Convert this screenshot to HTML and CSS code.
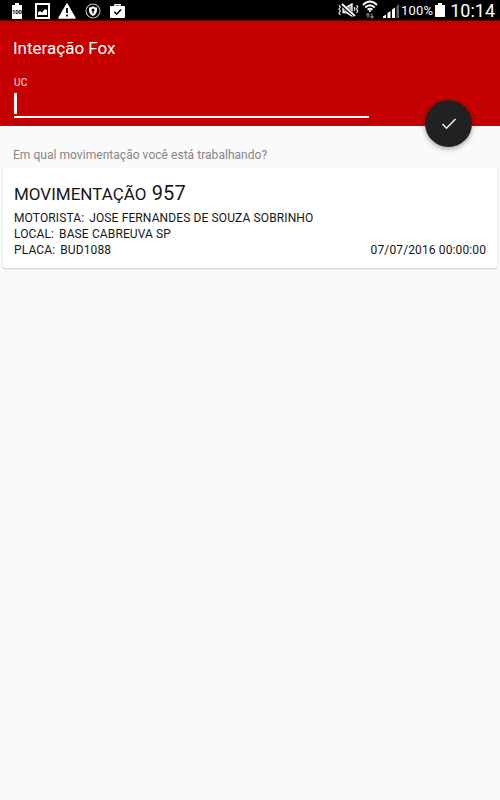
FILE: index.html
```html
<!DOCTYPE html>
<html lang="pt-BR">
<head>
<meta charset="UTF-8">
<meta name="viewport" content="width=device-width, initial-scale=1.0">
<title>Interação Fox</title>
<link rel="stylesheet" href="styles.css">
</head>
<body>

<!-- Barra de status -->
<div class="status-bar">
    <div class="status-left">
        <svg class="icon-battery-full" width="12" height="16" viewBox="0 0 12 16">
            <path d="M4 0h4v2h3v14H1V2h3z" fill="#fff"/>
            <text x="6" y="10.500" text-anchor="middle" textLength="10">100</text>
        </svg>
        <svg width="15" height="16" viewBox="0 0 15 16">
            <path d="M1 1h13v14H1z" fill="none" stroke="#fff" stroke-width="2"/>
            <path d="M3 12V9.500l2-1.500 2 1.500 3-3.500 2 1V12z" fill="#fff"/>
        </svg>
        <svg width="18" height="16" viewBox="0 0 18 16">
            <path d="M9 1L17 15H1z" fill="#fff" stroke="#fff" stroke-width="1.500" stroke-linejoin="round"/>
            <path d="M9 5v5M9 11.500v2" stroke="#000" stroke-width="1.800"/>
        </svg>
        <svg width="16" height="16" viewBox="0 0 16 16">
            <circle cx="8" cy="8" r="7" fill="none" stroke="#bbb" stroke-width="1.100"/>
            <path d="M4 4.500Q6.500 4.500 8 3.300Q9.500 4.500 12 4.500V7Q12 11 8 13Q4 11 4 7z" fill="#fff"/>
            <circle cx="8" cy="7" r="1.500"/>
            <path d="M8 7v3.500" stroke="#000" stroke-width="1.200"/>
        </svg>
        <svg width="15" height="16" viewBox="0 0 15 16">
            <path d="M5 3.500V1.800h5v1.700" fill="none" stroke="#fff" stroke-width="1.500"/>
            <rect y="3" width="15" height="12" rx="1" fill="#fff"/>
            <path d="M4.300 8.800l2.400 2.400 4.300-4.700" fill="none" stroke="#000" stroke-width="1.600"/>
        </svg>
    </div>
    <div class="status-right">
        <svg class="icon-mute" width="21" height="16" viewBox="0 0 21 16">
            <path d="M5 5.500h3l6-3.500v12l-6-3.500H5z" fill="#999" stroke="#fff" stroke-width="1.300"/>
            <path d="M4 3l13 11" stroke="#000" stroke-width="3"/>
            <path d="M4 2l13 12" stroke="#fff" stroke-width="1.800"/>
            <path d="M1 3l1.300 2L1 7l1.300 2L1 11l1.300 2M18.500 3l1.300 2-1.300 2 1.300 2-1.300 2M16.500 5v4" fill="none" stroke="#ddd" stroke-width="1.300"/>
        </svg>
        <svg class="icon-wifi" width="16" height="20" viewBox="0 0 16 20">
            <path d="M1 5Q8-2 15 5M3.200 7.500Q8 3 12.800 7.500M5.500 9.800Q8 7.800 10.500 9.800" fill="none" stroke="#fff" stroke-width="1.800"/>
            <circle cx="8" cy="11" r="1.100" fill="#fff"/>
            <path d="M6 18v-4.500M4.300 15.300L6 13.500l1.700 1.800M10 13.500V18M8.300 16.200L10 18l1.700-1.800" fill="none" stroke="#777" stroke-width="1.300"/>
        </svg>
        <svg class="icon-signal" width="17" height="15" viewBox="0 0 17 15">
            <path d="M0 15v-1.500l3-2V15zM4.500 15v-5l3-2v7zM9 15V6.500l3-2V15z" fill="#fff"/>
            <path d="M13.500 15V3L16 1v14z" fill="#666"/>
        </svg>
        <span class="status-percent">100%</span>
        <svg class="icon-battery" width="10" height="15" viewBox="0 0 10 15">
            <path d="M3 0h4v2h3v12H0V2h3z" fill="#fff"/>
        </svg>
        <span class="status-clock">10:14</span>
    </div>
</div>

<!-- Cabeçalho com o campo UC -->
<header>
    <h1>Interação Fox</h1>
    <label for="uc">UC</label>
    <div class="uc-field" id="uc"><span class="cursor"></span></div>
    <button class="fab" aria-label="Confirmar">
        <svg width="16" height="14" viewBox="0 0 16 14">
            <path d="M1.500 7l4 4.200L14.500 2" fill="none" stroke="#eee" stroke-width="1.600"/>
        </svg>
    </button>
</header>

<!-- Lista de movimentações -->
<main>
    <p class="question">Em qual movimentação você está trabalhando?</p>
    <div class="card">
        <h2>MOVIMENTAÇÃO <span>957</span></h2>
        <p><span class="label">MOTORISTA:</span><span class="driver">JOSE FERNANDES DE SOUZA SOBRINHO</span></p>
        <p><span class="label">LOCAL:</span><span class="place">BASE CABREUVA SP</span></p>
        <p><span class="label">PLACA:</span><span class="plate">BUD1088</span><span class="date">07/07/2016 00:00:00</span></p>
    </div>
</main>

</body>
</html>
```
FILE: styles.css
```css
* {
    box-sizing: border-box;
}

body {
    margin: 0;
    min-height: 800px;
    background-color: #fafafa;
    color: #161616;
    font-family: Roboto, sans-serif;
}

/* Barra de status */
.status-bar {
    display: flex;
    justify-content: space-between;
    height: 21px;
    padding: 0 5px 0 11px;
    background-color: #000;
    border-bottom: 1px solid #600000;
    color: #fff;
}

.status-left,
.status-right {
    display: flex;
    align-items: center;
}

.status-left {
    gap: 9px;
    padding-top: 1px;
}

.status-left svg:first-child {
    margin-right: 3px;
}

.status-left svg:nth-child(2) {
    margin-right: -1px;
}

.icon-battery-full text {
    font-size: 6px;
    font-weight: bold;
}

.icon-wifi {
    margin-left: 3px;
}

.icon-signal {
    margin: 0 0 0 5px;
}

.status-percent {
    margin: 1px 0 0 1px;
    font-size: 13px;
    letter-spacing: 0.2px;
}

.icon-battery {
    margin: 1px 0 0 2px;
}

.status-clock {
    margin-left: 5px;
    font-size: 18px;
}

/* Cabeçalho */
header {
    position: relative;
    height: 105px;
    padding: 16px 14px 0;
    background-color: #c40000;
    color: #fff;
}

h1 {
    margin: 0 0 0 -1px;
    font-size: 17px;
    font-weight: normal;
    line-height: 22px;
}

label {
    display: block;
    margin-top: 17px;
    font-size: 10px;
    letter-spacing: 0.2px;
    line-height: 14px;
    opacity: 0.9;
}

.uc-field {
    width: 355px;
    height: 25px;
    margin-top: 3px;
    border-bottom: 2px solid #fff;
}

.cursor {
    display: block;
    width: 3px;
    height: 21px;
    background-color: #fff;
}

.fab {
    position: absolute;
    right: 28px;
    bottom: -21px;
    display: flex;
    align-items: center;
    justify-content: center;
    width: 47px;
    height: 47px;
    padding: 0;
    border: none;
    border-radius: 50%;
    background-color: #212121;
    box-shadow: 0 2px 5px rgba(0, 0, 0, 0.35);
}

/* Conteúdo */
main {
    padding: 20px 3px 0;
}

.question {
    margin: 0 0 4px 10px;
    color: #858585;
    font-size: 12px;
    letter-spacing: 0.04px;
    line-height: 18px;
}

.card {
    height: 100px;
    padding: 12px 11px 0;
    border-radius: 2px;
    background-color: #fff;
    box-shadow: 0 1px 2px rgba(0, 0, 0, 0.2);
}

h2 {
    margin: 0 0 3px;
    font-size: 17px;
    font-weight: normal;
    line-height: 26px;
}

h2 span {
    margin-left: 1px;
    font-size: 20px;
    letter-spacing: 0.2px;
}

.card p {
    display: flex;
    gap: 5px;
    margin: 0;
    font-size: 12px;
    letter-spacing: 0.12px;
    line-height: 16px;
}

.date {
    margin-left: auto;
}
```
